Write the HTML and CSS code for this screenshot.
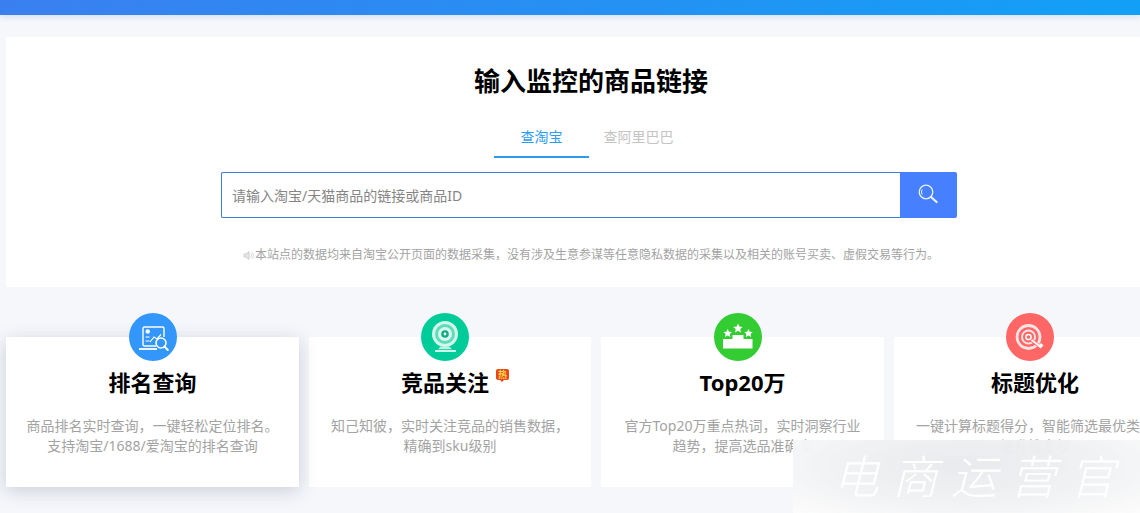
FILE: index.html
```html
<!DOCTYPE html>
<html lang="zh-CN">
<head>
    <meta charset="UTF-8">
    <meta name="viewport" content="width=device-width, initial-scale=1.0">
    <title>输入监控的商品链接</title>
    <link rel="stylesheet" href="styles.css">
</head>
<body>
<div class="topbar"></div>
<div class="wrap">
    <section class="panel">
        <h1>输入监控的商品链接</h1>
        <div class="tabs">
            <a class="tab active">查淘宝</a>
            <a class="tab other">查阿里巴巴</a>
        </div>
        <form class="search">
            <input type="text" placeholder="请输入淘宝/天猫商品的链接或商品ID">
            <button type="button" aria-label="搜索">
                <svg width="22" height="22" viewBox="0 0 22 22" fill="none" stroke="#eaf1ff">
                    <circle cx="9" cy="9" r="6.8" stroke-width="1.3"/>
                    <path d="M5.2 11.5a4.6 4.6 0 0 1 0-5" stroke-width="1"/>
                    <path d="M14 14l5.6 5" stroke-width="2.2" stroke-linecap="round"/>
                </svg>
            </button>
        </form>
        <p class="notice">
            <svg width="11" height="11" viewBox="0 0 11 11" fill="none" stroke="#c8c8c8">
                <path d="M1 4h2l3-2.500v8L3 7H1z" fill="#e4e4e4" stroke-width=".8"/>
                <path d="M7.500 3.500a2.500 2.500 0 0 1 0 4M9 2.200a4.500 4.500 0 0 1 0 6.600" stroke-width=".8"/>
            </svg>本站点的数据均来自淘宝公开页面的数据采集，没有涉及生意参谋等任意隐私数据的采集以及相关的账号买卖、虚假交易等行为。
        </p>
    </section>

    <section class="cards">
        <div class="card raised">
            <svg class="icon" viewBox="0 0 48 48" fill="none" stroke="#fff">
                <circle cx="24" cy="24" r="24" fill="#3396fb" stroke="none"/>
                <path d="M27 33H15.500a1.500 1.500 0 0 1-1.500-1.500v-16a1.500 1.500 0 0 1 1.500-1.500h18a1.500 1.500 0 0 1 1.500 1.500V24" stroke-width="1.400"/>
                <circle cx="18.700" cy="18.500" r="2.200" fill="#fff" stroke="none"/>
                <path d="M16.500 24h4M16.500 28h4" stroke-width="1.200"/>
                <path d="M21 29l4-5 3 2 4-4.500" stroke-width="1.200"/>
                <path d="M10 36h18" stroke-width="1.800"/>
                <circle cx="32" cy="30" r="5" fill="#3396fb" stroke-width="1.600"/>
                <path d="M35.500 33.500l3.300 3.500" stroke-width="2" stroke-linecap="round"/>
            </svg>
            <h2>排名查询</h2>
            <p>商品排名实时查询，一键轻松定位排名。<br>支持淘宝/1688/爱淘宝的排名查询</p>
        </div>
        <div class="card second">
            <svg class="icon" viewBox="0 0 48 48" fill="none">
                <circle cx="24" cy="24" r="24" fill="#00cc99"/>
                <circle cx="24" cy="21" r="13" fill="#d2f6ea"/>
                <circle cx="24" cy="21" r="10" fill="#5ddcbb"/>
                <circle cx="24" cy="21" r="7" fill="#d9f7ee"/>
                <circle cx="24" cy="21" r="3.800" fill="#0fa983"/>
                <circle cx="24" cy="21" r="1.400" fill="#fff"/>
                <path d="M19.500 33.500h9l2.500 2.700h-14z" fill="#bdf2e2"/>
                <path d="M14 38h21" stroke="#e5fbf4" stroke-width="1.800"/>
            </svg>
            <h2 class="hot-title">竞品关注<span class="hot">热</span></h2>
            <p>知己知彼，实时关注竞品的销售数据，<br>精确到sku级别</p>
        </div>
        <div class="card shifted">
            <svg class="icon" viewBox="0 0 48 48">
                <circle cx="24" cy="24" r="24" fill="#33cc33"/>
                <path d="M9 26h9.500v-4h11v4H38.500v9.500H9z" fill="#fff"/>
                <path d="M24 10.500l1.400 3 3.300.4-2.400 2.200.6 3.300-2.900-1.600-2.900 1.600.6-3.300-2.400-2.200 3.300-.4z" fill="#fff"/>
                <path d="M13.700 16l1.300 2.700 3 .4-2.200 2 .6 3-2.700-1.500-2.700 1.500.6-3-2.200-2 3-.4z" fill="#fff"/>
                <path d="M34.500 16l1.300 2.700 3 .4-2.200 2 .6 3-2.700-1.500-2.700 1.500.6-3-2.200-2 3-.4z" fill="#fff"/>
            </svg>
            <h2>Top20万</h2>
            <p>官方Top20万重点热词，实时洞察行业<br>趋势，提高选品准确率</p>
        </div>
        <div class="card shifted">
            <svg class="icon" viewBox="0 0 48 48" fill="none" stroke="#fff">
                <circle cx="24" cy="24" r="24" fill="#ff6666" stroke="none"/>
                <circle cx="22.500" cy="24" r="11.500" stroke="#fde3e3" stroke-width="2.800"/>
                <circle cx="22.500" cy="24" r="6.500" stroke="#fde3e3" stroke-width="2"/>
                <circle cx="22.500" cy="24" r="2.600" stroke-width="1.500"/>
                <path d="M26 27.500l8 6" stroke="#ff6666" stroke-width="3"/>
                <path d="M25.500 27l8 6" stroke-width="1.600"/>
                <path d="M32 33l3-3 2.500 2.500-3 3z" fill="#fff" stroke="none"/>
            </svg>
            <h2>标题优化</h2>
            <p>一键计算标题得分，智能筛选最优类目<br>提升搜索权</p>
        </div>
    </section>
</div>
<div class="watermark">电商运营官</div>
</body>
</html>
```

FILE: styles.css
```css
* { box-sizing: border-box; }
html, body { margin: 0; height: 100%; overflow: hidden; }
body { position: relative; background: #f5f7fb; font-family: "Noto Sans", "Noto Sans CJK SC", sans-serif; color: #000; }

.topbar { height: 15px; background: linear-gradient(90deg, #3a7ff0, #12a0f6); box-shadow: 0 2px 6px rgba(60, 110, 200, .18); }
.wrap { width: 1170px; margin-left: 6px; }

.panel { height: 250px; margin-top: 22px; padding-top: 29px; background: #fff; text-align: center; }
.panel h1 { margin: 0; font-size: 26px; line-height: 30px; font-weight: 700; }

.tabs { display: flex; justify-content: center; margin-top: 22px; }
.tab { width: 95px; height: 40px; padding-top: 9px; font-size: 14px; line-height: 20px; color: #c4c4c4; border-bottom: 2px solid transparent; }
.tab.other { width: 99px; }
.tab.active { color: #2d9cef; border-bottom-color: #2d9cef; }

.search { display: flex; width: 736px; height: 46px; margin: 14px auto 0; transform: translateX(-2px); }
.search input { flex: 1; min-width: 0; padding: 0 10px; font: inherit; font-size: 14px; border: 1px solid #3a80d2; border-right: none; border-radius: 2px 0 0 2px; outline: none; }
.search input::placeholder { color: #858585; opacity: 1; }
.search button { display: flex; align-items: center; justify-content: center; width: 57px; padding: 0 2px 3px 0; background: #4680ff; border: none; border-radius: 0 2px 2px 0; }

.notice { display: flex; align-items: center; justify-content: center; margin: 28px 0 0; font-size: 12px; line-height: 18px; color: #a3a3a3; }
.notice svg { margin-right: 1px; }

.cards { display: grid; grid-template-columns: 293px 282px 283px 1fr; gap: 10px; margin-top: 50px; }
.card { display: flex; flex-direction: column; align-items: center; height: 150px; background: #fff; text-align: center; }
.card.raised { position: relative; box-shadow: 0 4px 18px rgba(40, 50, 80, .2); }
.icon { display: block; width: 48px; height: 48px; margin-top: -24px; flex: none; }
.card.second .icon, .card.shifted .icon { margin-left: -10px; }
.card h2 { margin: 9px 0 0; font-size: 22px; line-height: 24px; font-weight: 700; }
.card p { margin: 22px 0 0; font-size: 14px; line-height: 20px; color: #a3a3a3; white-space: nowrap; }

.card h2.hot-title { position: relative; margin-left: -10px; }
.hot { position: absolute; left: 95px; top: -1px; width: 13px; height: 11px; font-size: 9px; line-height: 11px; font-weight: 700; color: #ffd84a; background: #e8471c; border-radius: 2px; }
.hot::after { content: ""; position: absolute; left: 4px; top: 11px; border: 2.5px solid transparent; border-top-color: #e8471c; border-bottom: none; }

.watermark { position: absolute; right: 0; bottom: 0; width: 347px; height: 73px; padding: 5px 0 0 40px; font-size: 46px; line-height: 62px; font-style: italic; font-weight: 300; letter-spacing: 13px; white-space: nowrap; color: #fff; background: radial-gradient(ellipse at 50% 35%, rgba(232, 233, 236, .95), rgba(240, 241, 243, .94) 55%, rgba(252, 252, 252, .96) 100%); backdrop-filter: blur(1px); }
```
